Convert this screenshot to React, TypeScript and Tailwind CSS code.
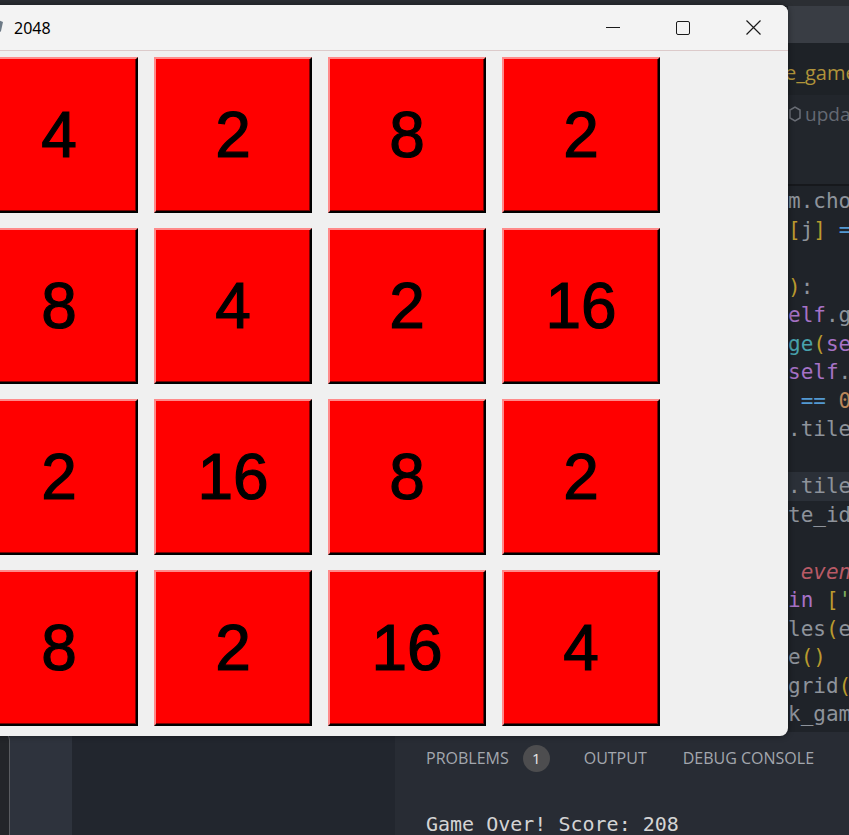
import React from "react";

const grid = [
  [4, 2, 8, 2],
  [8, 4, 2, 16],
  [2, 16, 8, 2],
  [8, 2, 16, 4],
];

type Seg = [string, string, boolean?];

const G = "text-[#8e939b]";
const Y = "text-[#b99a2e]";
const P = "text-[#a672c6]";
const T = "text-[#48a2ad]";
const B = "text-[#5399d2]";
const O = "text-[#b8865a]";
const R = "text-[#b85a66] italic";
const GR = "text-[#7fae5e]";

const lines: Seg[][] = [
  [["m.chos", G]],
  [["[", Y], ["j", G], ["]", Y], [" ", G], ["=", B]],
  [],
  [[")", Y], [":", G]],
  [["elf", P], [".gr", G]],
  [["ge", T], ["(", Y], ["sel", P]],
  [["self", P], [".g", G]],
  [[" ", G], ["==", B], [" ", G], ["0", O]],
  [[".tiles", G]],
  [],
  [[".tiles", G]],
  [["te_id", G]],
  [],
  [[" ", G], ["event", R]],
  [["in", P], [" ", G], ["[", Y], ["'U", GR]],
  [["les", G], ["(", Y], ["ev", G]],
  [["e", G], ["()", Y]],
  [["grid", G], ["(", Y]],
  [["k_game", G]],
];

function Tile({ v }: { v: number }) {
  return (
    <div className="h-[156px] w-[158px] bg-[#ff0000] border-2 border-t-[#ff8a8a] border-l-[#ff8a8a] border-b-black border-r-black flex items-center justify-center shadow-[inset_-1px_-1px_0_#7a0000]">
      <span className="text-[64px] leading-none text-black [-webkit-text-stroke:1.2px_black] font-['Liberation_Sans',Arial,sans-serif]">{v}</span>
    </div>
  );
}

export default function App() {
  return (
    <div className="relative w-[849px] h-[835px] overflow-hidden bg-[#1f2329]">
      {/* background: VS Code */}
      <div className="flex flex-col w-full h-full">
        <div className="h-[6px] shrink-0 bg-[#2b2e33]" />
        <div className="flex h-[726px] shrink-0">
          <div className="flex-1 bg-[#1f2329]" />
          <div className="w-[61px] flex flex-col overflow-hidden">
            <div className="h-[37px] shrink-0 bg-[#393d44]" />
            <div className="h-[52px] shrink-0 bg-[#1e2227] flex items-center pt-[8px]">
              <span className="text-[20px] text-[#b0933a] font-['Open_Sans',sans-serif] whitespace-nowrap -ml-[3px]">e_game</span>
            </div>
            <div className="h-[89px] shrink-0 bg-[#22262c] pt-[5px]">
              <div className="flex items-center gap-[4px] whitespace-nowrap">
                <svg width="12" height="16" viewBox="0 0 12 16" className="ml-[1px] shrink-0">
                  <path d="M1 4 L6 1 L11 4 L11 12 L6 15 L1 12 Z" fill="none" stroke="#6a6e76" strokeWidth="1.5" />
                </svg>
                <span className="text-[19px] text-[#646973] font-['Open_Sans',sans-serif]">updat</span>
              </div>
            </div>
            <div className="h-[2px] shrink-0 bg-[#16181c]" />
            <div className="flex-1 bg-[#1f2329] pt-[1px] font-['DejaVu_Sans_Mono',monospace] text-[21px] leading-[28.5px]">
              {lines.map((l, i) => (
                <div key={i} className={`h-[28.5px] whitespace-pre ${i === 10 ? "bg-[#2b3038]" : ""}`}>
                  {l.map(([t, c], j) => (
                    <span key={j} className={c}>{t}</span>
                  ))}
                </div>
              ))}
            </div>
          </div>
        </div>
        <div className="flex flex-1 min-h-0 overflow-hidden">
          <div className="w-[10px] bg-[#232529] border-t border-r border-[#5a5c60] rounded-tr-[8px]" />
          <div className="w-[62px] bg-[#2e333d]" />
          <div className="w-[323px] bg-[#22262e]" />
          <div className="flex-1 bg-[#282c34] flex flex-col pl-[31px]">
            <div className="flex items-center h-[52px] shrink-0 pt-[0px] font-['Open_Sans',sans-serif] text-[16px] text-[#a3a7ae]">
              <span>PROBLEMS</span>
              <span className="ml-[14px] w-[27px] h-[27px] rounded-full bg-[#4d4d4f] text-[#e8e8e8] flex items-center justify-center text-[15px]">1</span>
              <span className="ml-[34px]">OUTPUT</span>
              <span className="ml-[36px]">DEBUG CONSOLE</span>
            </div>
            <div className="mt-[25px] font-['DejaVu_Sans_Mono',monospace] text-[20px] text-[#d4d4d4] whitespace-pre">Game Over! Score: 208</div>
          </div>
        </div>
      </div>

      {/* Tk window */}
      <div className="absolute left-[-28px] top-[5px] w-[816px] h-[731px] bg-[#f0f0f0] rounded-r-[8px] shadow-[0_0_6px_rgba(0,0,0,0.45)] flex flex-col overflow-hidden">
        <div className="h-[46px] bg-[#f3f3f3] border-b border-[#dccaca] flex items-center shrink-0">
          <svg width="10" height="18" viewBox="0 0 10 18" className="ml-[22px]">
            <path d="M4 1 L9 3 L7 12 L3 17 L2 10 Z" fill="#6d7a86" />
          </svg>
          <span className="ml-[10px] text-[16px] text-black font-['Noto_Sans',sans-serif]">2048</span>
          <div className="flex-1" />
          <div className="w-[70px] h-full flex items-center justify-center">
            <div className="w-[14px] h-[1px] bg-[#1a1a1a]" />
          </div>
          <div className="w-[70px] h-full flex items-center justify-center">
            <div className="w-[14px] h-[14px] border border-[#1a1a1a] rounded-[2px]" />
          </div>
          <div className="w-[70px] h-full flex items-center justify-center">
            <svg width="15" height="15" viewBox="0 0 15 15">
              <path d="M0.5 0.5 L14.5 14.5 M14.5 0.5 L0.5 14.5" stroke="#1a1a1a" strokeWidth="1.2" />
            </svg>
          </div>
        </div>
        <div className="pl-[8px] pt-[6px] grid grid-cols-[repeat(4,158px)] gap-x-[16px] gap-y-[15px]">
          {grid.flat().map((v, i) => (
            <Tile key={i} v={v} />
          ))}
        </div>
      </div>
    </div>
  );
}
